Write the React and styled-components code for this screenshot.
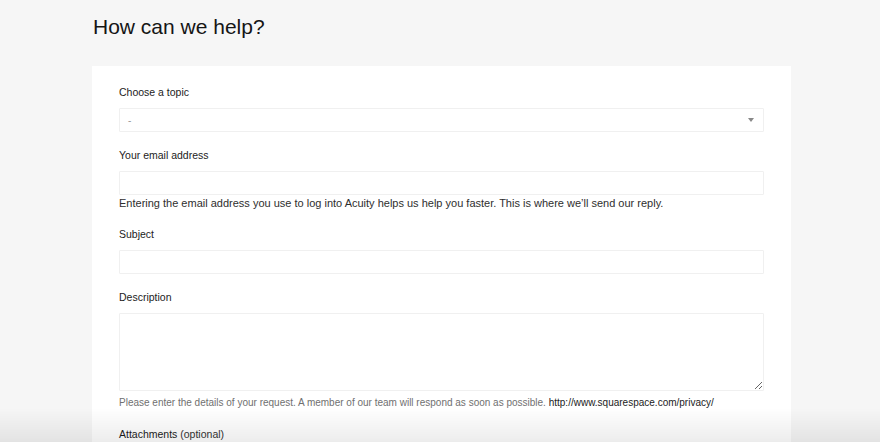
import React from "react";
import styled, { createGlobalStyle } from "styled-components";

const Global = createGlobalStyle`
  html, body { margin: 0; padding: 0; background: #f6f6f6; }
  body { font-family: "Liberation Sans", Arial, sans-serif; color: #1f1f1f; }
  * { box-sizing: border-box; }
`;

const Page = styled.div`
  padding: 15px 0 0 92px;
  width: 880px;
  min-height: 442px;
`;

const Heading = styled.h1`
  margin: 0 0 27px 1px;
  font-size: 21px;
  line-height: 24px;
  font-weight: 400;
  color: #151515;
`;

const Card = styled.form`
  width: 699px;
  background: #fff;
  padding: 18px 27px 40px;
  display: flex;
  flex-direction: column;
  gap: 15px;
`;

const Field = styled.div`
  display: flex;
  flex-direction: column;
`;

const Label = styled.label`
  font-size: 10.5px;
  line-height: 16px;
  color: #1c1c1c;
  margin-bottom: 8px;
`;

const Optional = styled.span`
  color: #333;
`;

const inputBase = `
  width: 645px;
  border: 1px solid #f0f0f0;
  border-radius: 1px;
  background: #fff;
  font-family: "Liberation Sans", Arial, sans-serif;
  font-size: 11px;
  color: #777;
  outline: none;
`;

const TextInput = styled.input`
  ${inputBase}
  height: 24px;
  padding: 0 8px;
`;

const SelectBox = styled.div`
  ${inputBase}
  height: 24px;
  padding: 0 8px;
  display: flex;
  align-items: center;
  justify-content: space-between;
`;

const Dash = styled.span`
  color: #999;
  font-size: 10px;
`;

const Caret = styled.span`
  width: 0;
  height: 0;
  border-left: 3px solid transparent;
  border-right: 3px solid transparent;
  border-top: 4px solid #888;
  margin-right: 1px;
`;

const TextArea = styled.textarea`
  ${inputBase}
  height: 78px;
  padding: 6px 8px;
  resize: vertical;
  display: block;
`;

const Help = styled.p`
  margin: ${(p) => (p.$gapTop ? "4px" : "0")} 0 0;
  font-size: ${(p) => (p.$muted ? "10px" : "11px")};
  line-height: 16px;
  color: ${(p) => (p.$muted ? "#707070" : "#2e2e2e")};
  white-space: nowrap;
`;

const Link = styled.span`
  color: #222;
`;

const Shade = styled.div`
  position: fixed;
  left: 0;
  right: 0;
  bottom: 0;
  height: 34px;
  pointer-events: none;
  background: linear-gradient(to bottom, rgba(0,0,0,0), rgba(0,0,0,0.075));
`;

export default function App() {
  return (
    <>
      <Global />
      <Page>
        <Heading>How can we help?</Heading>
        <Card onSubmit={(e) => e.preventDefault()}>
          <Field>
            <Label>Choose a topic</Label>
            <SelectBox>
              <Dash>-</Dash>
              <Caret />
            </SelectBox>
          </Field>
          <Field>
            <Label>Your email address</Label>
            <TextInput type="email" />
            <Help>
              Entering the email address you use to log into Acuity helps us help you faster. This is where we’ll send our reply.
            </Help>
          </Field>
          <Field>
            <Label>Subject</Label>
            <TextInput type="text" />
          </Field>
          <Field>
            <Label>Description</Label>
            <TextArea />
            <Help $muted $gapTop>
              Please enter the details of your request. A member of our team will respond as soon as possible.{" "}
              <Link>http://www.squarespace.com/privacy/</Link>
            </Help>
          </Field>
          <Field>
            <Label>
              Attachments <Optional>(optional)</Optional>
            </Label>
          </Field>
        </Card>
      </Page>
      <Shade />
    </>
  );
}
